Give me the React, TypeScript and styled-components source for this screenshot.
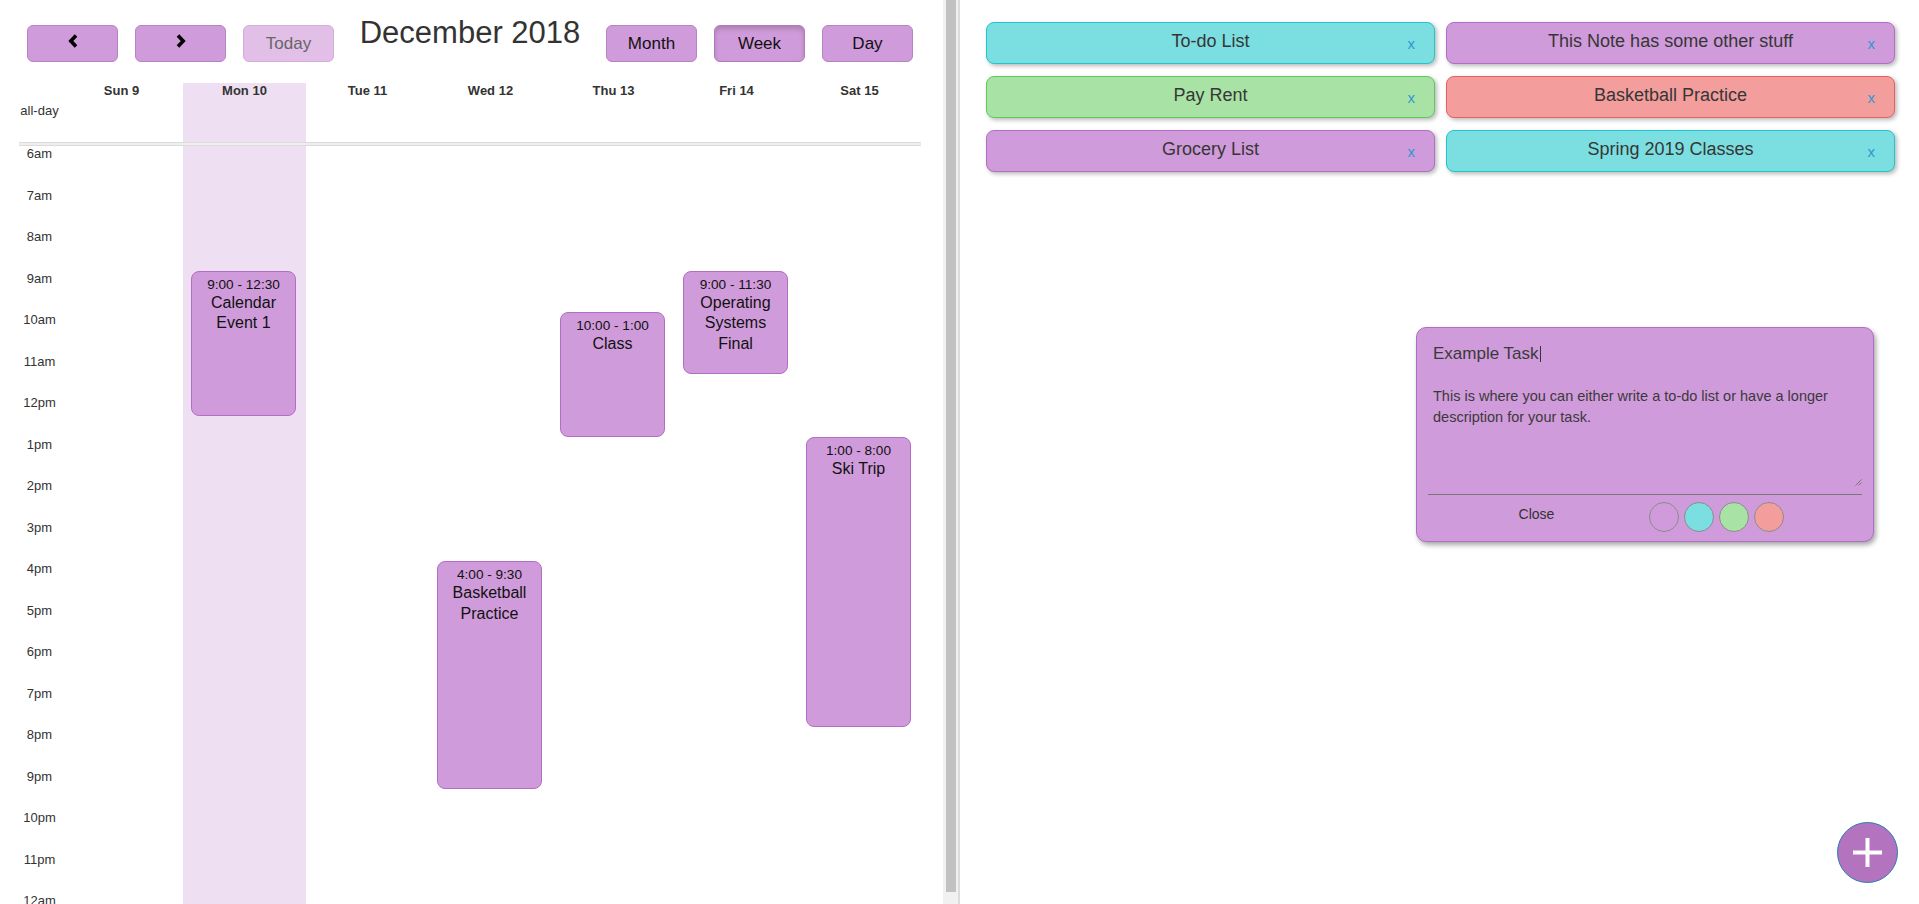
import React from 'react';
import styled, { createGlobalStyle, css } from 'styled-components';

const GlobalStyle = createGlobalStyle`
  html, body { margin: 0; padding: 0; height: 100%; overflow: hidden; background: #fff; }
  body { font-family: "Liberation Sans", Arial, sans-serif; color: #333; }
  * { box-sizing: border-box; }
`;

const HOUR = 41.5;
const START = 6;

type Tone = 'purple' | 'cyan' | 'green' | 'red';
const tones: Record<Tone, { fill: string; border: string }> = {
  purple: { fill: '#d09bda', border: '#b46dc5' },
  cyan: { fill: '#7bdee0', border: '#1fc6ce' },
  green: { fill: '#a8e3a5', border: '#5ccb5c' },
  red: { fill: '#f39e9c', border: '#e8605e' },
};

const Page = styled.div`
  display: flex;
  width: 100%;
  height: 100vh;
`;

/* ---------- calendar ---------- */
const CalendarPane = styled.section`
  flex: none;
  width: 960px;
  height: 100%;
  display: flex;
  border-right: 2px solid #dcdcdc;
`;

const CalendarScroll = styled.div`
  flex: 1;
  min-width: 0;
  overflow: hidden;
`;

const ScrollTrack = styled.div`
  flex: none;
  width: 15px;
  height: 100%;
  background: #f1f1f1;
  padding: 0 2px 12px 3px;
`;

const ScrollThumb = styled.div`
  height: 100%;
  background: #c1c1c1;
`;

const Toolbar = styled.div`
  display: flex;
  justify-content: space-between;
  align-items: flex-start;
  height: 83px;
  padding: 15px 30px 0 27px;
`;

const ButtonGroup = styled.div`
  display: flex;
  gap: 17px;
  margin-top: 10px;
`;

const ToolButton = styled.button<{ $active?: boolean; $muted?: boolean }>`
  width: 91px;
  height: 37px;
  padding: 0;
  display: flex;
  align-items: center;
  justify-content: center;
  border: 1px solid #b982c4;
  border-radius: 6px;
  background: #d09bda;
  color: #111;
  font-family: inherit;
  font-size: 17px;
  ${(p) =>
    p.$active &&
    css`
      box-shadow: inset 0 3px 5px rgba(0, 0, 0, 0.18);
      border-color: #b27abd;
    `}
  ${(p) =>
    p.$muted &&
    css`
      background: #e1bfe7;
      border-color: #d5abdd;
      color: #666;
    `}
`;

const Chevron = styled.svg`
  width: 12px;
  height: 14px;
  margin-bottom: 6px;
`;

const Title = styled.h2`
  margin: 0;
  font-size: 31px;
  font-weight: normal;
  line-height: 36px;
  color: #333;
`;

const Grid = styled.div`
  margin: 0 22px 0 19px;
`;

const Row = styled.div<{ $height: number }>`
  display: grid;
  grid-template-columns: 41px repeat(7, 1fr);
  height: ${(p) => p.$height}px;
`;

const HeadCell = styled.div<{ $today?: boolean }>`
  font-size: 13px;
  font-weight: bold;
  line-height: 16px;
  text-align: center;
  color: #333;
  background: ${(p) => (p.$today ? '#eee0f2' : 'transparent')};
`;

const AllDayCell = styled.div<{ $today?: boolean }>`
  font-size: 13px;
  line-height: 15px;
  padding-top: 4px;
  text-align: center;
  color: #333;
  background: ${(p) => (p.$today ? '#eee0f2' : 'transparent')};
`;

const Divider = styled.div`
  height: 4px;
  border-top: 1px solid #dcdcdc;
  border-bottom: 1px solid #dcdcdc;
  background: #eeeeee;
`;

const Body = styled.div`
  display: grid;
  grid-template-columns: 41px repeat(7, 1fr);
`;

const Gutter = styled.div`
  display: flex;
  flex-direction: column;
`;

const TimeLabel = styled.div`
  height: ${HOUR}px;
  flex: none;
  font-size: 13px;
  line-height: 15px;
  text-align: center;
  color: #333;
`;

const DayColumn = styled.div<{ $today?: boolean }>`
  position: relative;
  background: ${(p) => (p.$today ? '#eee0f2' : 'transparent')};
`;

const EventBox = styled.div`
  position: absolute;
  left: 8px;
  right: 10px;
  padding: 4px 3px 0;
  border: 1px solid #b46dc5;
  border-radius: 8px;
  background: #d09bda;
  color: #111;
  text-align: center;
  overflow: hidden;
`;

const EventTime = styled.div`
  font-size: 13.6px;
  line-height: 17px;
  white-space: nowrap;
`;

const EventTitle = styled.div`
  font-size: 16px;
  line-height: 20.5px;
`;

/* ---------- notes ---------- */
const NotesPane = styled.section`
  flex: 1;
  position: relative;
  height: 100%;
`;

const NotesGrid = styled.div`
  display: grid;
  grid-template-columns: 1fr 1fr;
  column-gap: 11px;
  row-gap: 12px;
  padding: 22px 24px 0 26px;
`;

const NoteCard = styled.div<{ $tone: Tone }>`
  height: 42px;
  display: grid;
  grid-template-columns: 1fr auto 1fr;
  align-items: center;
  padding: 0 19px;
  border: 1px solid ${(p) => tones[p.$tone].border};
  border-radius: 8px;
  background: ${(p) => tones[p.$tone].fill};
  box-shadow: 2px 2px 4px rgba(0, 0, 0, 0.28);
`;

const NoteTitle = styled.span`
  grid-column: 2;
  font-size: 18px;
  line-height: 21px;
  color: #363636;
  white-space: nowrap;
  margin-bottom: 3px;
`;

const RemoveX = styled.span`
  grid-column: 3;
  justify-self: end;
  font-size: 15px;
  line-height: 17px;
  color: #2f97d3;
`;

const Editor = styled.div`
  position: absolute;
  left: 456px;
  top: 327px;
  width: 458px;
  height: 215px;
  display: flex;
  flex-direction: column;
  padding: 16px 11px 0;
  border: 1px solid #b36cc4;
  border-radius: 10px;
  background: #d09bda;
  box-shadow: 2px 3px 5px rgba(0, 0, 0, 0.35);
`;

const EditorTitle = styled.div`
  display: flex;
  align-items: center;
  height: 20px;
  padding-left: 5px;
  font-size: 17px;
  line-height: 20px;
  color: #3a3a3a;
`;

const Caret = styled.span`
  width: 1px;
  height: 16px;
  margin-left: 1px;
  background: #333;
`;

const EditorBody = styled.div`
  position: relative;
  height: 117px;
  margin-top: 14px;
  padding: 8px 5px 0;
  border-bottom: 1px solid #777;
  font-size: 14.5px;
  line-height: 21px;
  color: #3a3a3a;
`;

const Grip = styled.svg`
  position: absolute;
  right: 0;
  bottom: 8px;
  width: 7px;
  height: 7px;
`;

const EditorFooter = styled.div`
  display: grid;
  grid-template-columns: 1fr 1fr;
  padding-top: 7px;
`;

const CloseButton = styled.span`
  justify-self: center;
  margin-top: 4px;
  font-size: 14px;
  line-height: 16px;
  color: #333;
`;

const Swatches = styled.div`
  display: flex;
  gap: 5px;
  margin-left: 4px;
`;

const Swatch = styled.span<{ $tone: Tone }>`
  width: 30px;
  height: 30px;
  border-radius: 50%;
  border: 1px solid #8c8c8c;
  background: ${(p) => tones[p.$tone].fill};
`;

const Fab = styled.button`
  position: absolute;
  right: 21px;
  bottom: 21px;
  width: 61px;
  height: 61px;
  padding: 0;
  display: flex;
  align-items: center;
  justify-content: center;
  border: 1px solid #2b7db5;
  border-radius: 50%;
  background: #b473be;
`;

/* ---------- data ---------- */
const days = [
  { label: 'Sun 9' },
  { label: 'Mon 10', today: true },
  { label: 'Tue 11' },
  { label: 'Wed 12' },
  { label: 'Thu 13' },
  { label: 'Fri 14' },
  { label: 'Sat 15' },
];

const hours = [
  '6am', '7am', '8am', '9am', '10am', '11am', '12pm', '1pm', '2pm', '3pm',
  '4pm', '5pm', '6pm', '7pm', '8pm', '9pm', '10pm', '11pm', '12am',
];

const events = [
  { day: 1, start: 9, end: 12.5, time: '9:00 - 12:30', title: 'Calendar Event 1' },
  { day: 3, start: 16, end: 21.5, time: '4:00 - 9:30', title: 'Basketball Practice' },
  { day: 4, start: 10, end: 13, time: '10:00 - 1:00', title: 'Class' },
  { day: 5, start: 9, end: 11.5, time: '9:00 - 11:30', title: 'Operating Systems Final' },
  { day: 6, start: 13, end: 20, time: '1:00 - 8:00', title: 'Ski Trip' },
];

const notes: { title: string; tone: Tone }[] = [
  { title: 'To-do List', tone: 'cyan' },
  { title: 'This Note has some other stuff', tone: 'purple' },
  { title: 'Pay Rent', tone: 'green' },
  { title: 'Basketball Practice', tone: 'red' },
  { title: 'Grocery List', tone: 'purple' },
  { title: 'Spring 2019 Classes', tone: 'cyan' },
];

const ChevronIcon = ({ dir }: { dir: 'left' | 'right' }) => (
  <Chevron viewBox="0 0 12 14">
    <path
      d={dir === 'left' ? 'M9 1.5 L3.8 7 L9 12.5' : 'M3 1.5 L8.2 7 L3 12.5'}
      fill="none"
      stroke="#000"
      strokeWidth="3.6"
      strokeLinejoin="miter"
    />
  </Chevron>
);

export default function App() {
  return (
    <>
      <GlobalStyle />
      <Page>
        <CalendarPane>
          <CalendarScroll>
            <Toolbar>
              <ButtonGroup>
                <ToolButton aria-label="prev">
                  <ChevronIcon dir="left" />
                </ToolButton>
                <ToolButton aria-label="next">
                  <ChevronIcon dir="right" />
                </ToolButton>
                <ToolButton $muted>Today</ToolButton>
              </ButtonGroup>
              <Title>December 2018</Title>
              <ButtonGroup>
                <ToolButton>Month</ToolButton>
                <ToolButton $active>Week</ToolButton>
                <ToolButton>Day</ToolButton>
              </ButtonGroup>
            </Toolbar>
            <Grid>
              <Row $height={16}>
                <HeadCell />
                {days.map((d) => (
                  <HeadCell key={d.label} $today={d.today}>
                    {d.label}
                  </HeadCell>
                ))}
              </Row>
              <Row $height={43}>
                <AllDayCell>all-day</AllDayCell>
                {days.map((d) => (
                  <AllDayCell key={d.label} $today={d.today} />
                ))}
              </Row>
              <Divider />
              <Body>
                <Gutter>
                  {hours.map((h) => (
                    <TimeLabel key={h}>{h}</TimeLabel>
                  ))}
                </Gutter>
                {days.map((d, i) => (
                  <DayColumn key={d.label} $today={d.today}>
                    {events
                      .filter((e) => e.day === i)
                      .map((e) => (
                        <EventBox
                          key={e.title}
                          style={{
                            top: (e.start - START) * HOUR,
                            height: (e.end - e.start) * HOUR,
                          }}
                        >
                          <EventTime>{e.time}</EventTime>
                          <EventTitle>{e.title}</EventTitle>
                        </EventBox>
                      ))}
                  </DayColumn>
                ))}
              </Body>
            </Grid>
          </CalendarScroll>
          <ScrollTrack>
            <ScrollThumb />
          </ScrollTrack>
        </CalendarPane>

        <NotesPane>
          <NotesGrid>
            {notes.map((n) => (
              <NoteCard key={n.title} $tone={n.tone}>
                <NoteTitle>{n.title}</NoteTitle>
                <RemoveX>x</RemoveX>
              </NoteCard>
            ))}
          </NotesGrid>

          <Editor>
            <EditorTitle>
              Example Task
              <Caret />
            </EditorTitle>
            <EditorBody>
              This is where you can either write a to-do list or have a longer description for your
              task.
              <Grip viewBox="0 0 7 7">
                <path d="M6.5 0.5 L0.5 6.5 M6.5 3.5 L3.5 6.5" stroke="#777" strokeWidth="1" />
              </Grip>
            </EditorBody>
            <EditorFooter>
              <CloseButton>Close</CloseButton>
              <Swatches>
                <Swatch $tone="purple" />
                <Swatch $tone="cyan" />
                <Swatch $tone="green" />
                <Swatch $tone="red" />
              </Swatches>
            </EditorFooter>
          </Editor>

          <Fab aria-label="add note">
            <svg width="29" height="29" viewBox="0 0 29 29">
              <rect x="12.5" y="0" width="4" height="29" fill="#fff" />
              <rect x="0" y="12.5" width="29" height="4" fill="#fff" />
            </svg>
          </Fab>
        </NotesPane>
      </Page>
    </>
  );
}
